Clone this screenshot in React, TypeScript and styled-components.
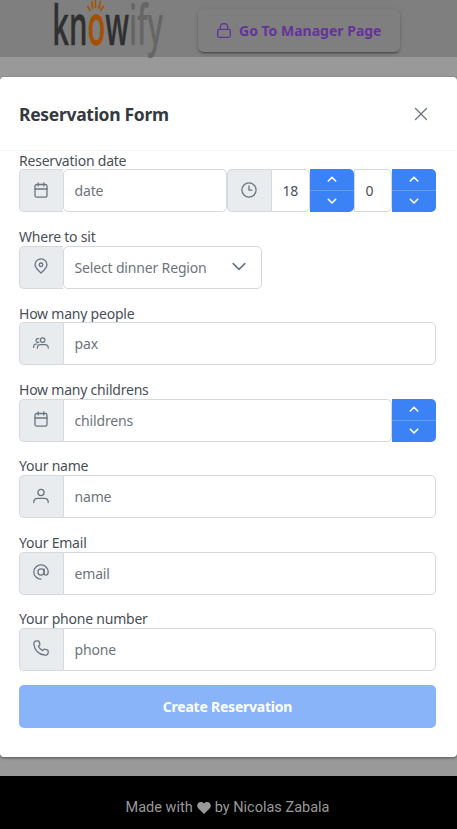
import React from "react";
import styled, { createGlobalStyle } from "styled-components";

const GlobalStyle = createGlobalStyle`
  * { box-sizing: border-box; }
  body {
    margin: 0;
    background: #999999;
    font-family: "Noto Sans", "Open Sans", sans-serif;
    font-size: 14px;
    color: #495057;
  }
`;

const Page = styled.div`
  height: 829px;
  display: flex;
  flex-direction: column;
  overflow: hidden;
`;

const TopBar = styled.header`
  height: 57px;
  flex: none;
  display: flex;
  align-items: flex-start;
  padding-left: 50px;
  background: #7f7f7f;
`;

const Logo = styled.svg`
  width: 120px;
  height: 57px;
  flex: none;
  overflow: visible;
  margin-right: 28px;
  font-family: "Open Sans", sans-serif;
  font-weight: 600;
`;

const ManagerButton = styled.button`
  width: 202px;
  height: 43px;
  margin-top: 9px;
  padding: 0 0 0 18px;
  display: flex;
  align-items: center;
  gap: 7px;
  border: 0;
  border-radius: 6px;
  background: #7f7f7f;
  color: #663399;
  font: 700 14px "Noto Sans", sans-serif;
  letter-spacing: 0;
  white-space: nowrap;
  box-shadow: 0 3px 1px -2px rgba(0, 0, 0, 0.2), 0 2px 2px rgba(0, 0, 0, 0.16),
    0 1px 5px rgba(0, 0, 0, 0.14);
`;

const Backdrop = styled.main`
  flex: 1;
  padding-top: 20px;
`;

const Dialog = styled.section`
  height: 680px;
  border-radius: 4px;
  background: #ffffff;
  box-shadow: 0 1px 3px rgba(0, 0, 0, 0.45);
`;

const DialogHeader = styled.div`
  height: 74px;
  padding: 0 28px 0 19px;
  display: flex;
  align-items: center;
  justify-content: space-between;
  border-bottom: 1px solid #f6f6f7;
`;

const Title = styled.h1`
  margin: 0;
  font-size: 17.5px;
  font-weight: 700;
  line-height: 24px;
  color: #343a40;
  letter-spacing: -0.3px;
`;

const CloseButton = styled.button`
  width: 16px;
  height: 16px;
  padding: 0;
  border: 0;
  display: flex;
  align-items: center;
  justify-content: center;
  background: none;
  color: #6c757d;
`;

const Form = styled.form`
  margin-top: -0.37px;
  padding: 0 21px 0 19px;
  display: flex;
  flex-direction: column;
`;

const Field = styled.div`
  height: 76.45px;
`;

const Label = styled.label`
  display: block;
  height: 18.72px;
  line-height: 20px;
  white-space: nowrap;
  letter-spacing: -0.22px;
`;

const Group = styled.div`
  display: flex;
  height: 43px;
`;

const Addon = styled.span`
  width: 44px;
  flex: none;
  display: flex;
  align-items: center;
  justify-content: center;
  padding: 0 0.5px 2px 0;
  border: 1px solid #d4d9de;
  border-right: 0;
  border-radius: 5px 0 0 5px;
  background: #e9ecef;
  color: #6c757d;
`;

const Box = styled.div<{ $width?: number; $rounded?: boolean; $value?: boolean }>`
  ${(p) => (p.$width ? `width: ${p.$width}px; flex: none;` : "flex: 1;")}
  display: flex;
  align-items: center;
  justify-content: space-between;
  padding: 0 14px 0 10.5px;
  border: 1px solid #d4d9de;
  border-radius: ${(p) => (p.$rounded ? "5px" : "0 5px 5px 0")};
  background: #ffffff;
  color: ${(p) => (p.$value ? "#495057" : "#6c757d")};
  letter-spacing: -0.16px;
  white-space: nowrap;
`;

const Spinner = styled.div`
  width: 44px;
  flex: none;
  display: flex;
  flex-direction: column;
  overflow: hidden;
  border-radius: 0 5px 5px 0;
  background: #3b82f6;
`;

const Step = styled.button`
  flex: 1;
  padding: 0 0 1px;
  display: flex;
  align-items: center;
  justify-content: center;
  border: 0;
  background: none;
  color: #ffffff;
  & + & {
    border-top: 1px solid #659df8;
  }
`;

const Submit = styled.button`
  height: 43px;
  margin-top: -0.8px;
  border: 0;
  border-radius: 5px;
  background: #89b4fa;
  color: #ffffff;
  font: 700 14px "Noto Sans", sans-serif;
  letter-spacing: -0.22px;
`;

const Footer = styled.footer`
  height: 53px;
  flex: none;
  display: flex;
  align-items: center;
  justify-content: center;
  gap: 4px;
  padding: 10px 2px 0 0;
  background: #000000;
  color: #999999;
  font-family: Roboto, sans-serif;
  font-size: 14.5px;
`;

const Glyph = styled.svg<{ $size?: number; $stroke?: number }>`
  width: ${(p) => p.$size ?? 16}px;
  height: ${(p) => p.$size ?? 16}px;
  flex: none;
  fill: none;
  stroke: currentColor;
  stroke-width: ${(p) => p.$stroke ?? 1.3};
  stroke-linecap: round;
  stroke-linejoin: round;
`;

const CalendarIcon = () => (
  <Glyph viewBox="0 0 16 16">
    <rect x="2" y="2.5" width="12" height="12.6" rx="1.7" />
    <path d="M2 7H14M5.2 .9V4M10.8 .9V4" />
  </Glyph>
);
const ClockIcon = () => (
  <Glyph viewBox="0 0 16 16">
    <circle cx="8" cy="8" r="7.1" />
    <path d="M8 3.8V8.2H10.8" />
  </Glyph>
);
const PinIcon = () => (
  <Glyph viewBox="0 0 16 16">
    <path d="M8 15C5.2 12.5 2 9.6 2 6.7a6 5.8 0 0 1 12 0C14 9.6 10.8 12.5 8 15Z" />
    <circle cx="8" cy="6.8" r="1.8" />
  </Glyph>
);
const UsersIcon = () => (
  <Glyph viewBox="0 0 16 16" $stroke={1.2}>
    <circle cx="9.7" cy="5.1" r="2.3" />
    <path d="M4.4 13.2V12.5C4.4 10.5 5.7 9.6 7.4 9.6H11.8C14 9.6 15.3 10.9 15.3 13.2" />
    <path d="M5.9 7.2C4.1 7.6 3.1 6.6 3.1 5.4C3.1 4 4.3 3.2 5.8 3.7M.7 12.5V11.5C.7 10 1.7 9 3.3 9H4.2" />
  </Glyph>
);
const UserIcon = () => (
  <Glyph viewBox="0 0 16 16">
    <circle cx="8" cy="4.5" r="3.1" />
    <path d="M.8 14.5V14C.8 11.6 2.4 10.4 4.8 10.4H11.2C13.6 10.4 15.2 11.6 15.2 14V14.5" />
  </Glyph>
);
const AtIcon = () => (
  <Glyph viewBox="0 0 16 16">
    <circle cx="8" cy="8" r="3.1" />
    <path d="M11.1 5V9.4C11.1 12 15.2 11.6 15.2 8C15.2 4 12 .9 8 .9S.8 4 .8 8S4 15.1 8 15.1" />
  </Glyph>
);
const PhoneIcon = () => (
  <Glyph viewBox="0 0 16 16">
    <path d="M3.6.9C2 .9.7 2.2.8 3.9C1.5 10.2 5.7 14.6 12.1 15.2C13.9 15.3 15.2 14 15.2 12.4V11.2C15.2 10.5 14.8 10.1 14.2 9.9L11.7 9.2C11.2 9 10.8 9.2 10.5 9.6L9.7 10.7C7.9 9.8 6.2 8.1 5.3 6.3L6.5 5.4C6.9 5.1 7 4.7 6.9 4.2L6.2 1.8C6 1.2 5.6.9 5 .9Z" />
  </Glyph>
);
const LockIcon = () => (
  <Glyph viewBox="0 0 16 16">
    <rect x="1.7" y="6.3" width="12.6" height="8" rx="1.7" />
    <path d="M4.3 6.2V3.8a3.7 3.3 0 0 1 7.4 0V6.2" />
  </Glyph>
);
const Chevron = ({ up = false }: { up?: boolean }) => (
  <Glyph $size={10} $stroke={1.6} viewBox="0 0 10 10">
    <path d={up ? "M1.3 7L5 3.2L8.7 7" : "M1.3 3.2L5 7L8.7 3.2"} />
  </Glyph>
);

const Steps = () => (
  <Spinner>
    <Step type="button" aria-label="Increase"><Chevron up /></Step>
    <Step type="button" aria-label="Decrease"><Chevron /></Step>
  </Spinner>
);

const KnowifyLogo = () => (
  <Logo viewBox="0 0 120 57" aria-label="knowify">
    <text x="2.2" y="44.5" fontSize="56" fill="#303030" stroke="#303030" strokeWidth="0.3" textLength="111" lengthAdjust="spacingAndGlyphs">
      kn<tspan fill="#a45000" stroke="#a45000">o</tspan>w<tspan fill="#666666" stroke="none">ify</tspan>
    </text>
    <path d="M37.5 6L40.5 11M41.5 1L42.9 9M45.5 0V8M50.5 1L48.5 9M53.5 6L50.5 11" stroke="#a45000" strokeWidth="1.6" />
  </Logo>
);

type TextFieldProps = {
  label: string;
  placeholder: string;
  icon: React.ReactNode;
  steps?: boolean;
};

const TextField = ({ label, placeholder, icon, steps }: TextFieldProps) => (
  <Field>
    <Label>{label}</Label>
    <Group>
      <Addon>{icon}</Addon>
      <Box>{placeholder}</Box>
      {steps && <Steps />}
    </Group>
  </Field>
);

export default function App() {
  return (
    <Page>
      <GlobalStyle />
      <TopBar>
        <KnowifyLogo />
        <ManagerButton><LockIcon />Go To Manager Page</ManagerButton>
      </TopBar>
      <Backdrop>
        <Dialog role="dialog">
          <DialogHeader>
            <Title>Reservation Form</Title>
            <CloseButton aria-label="Close">
              <Glyph $size={14} viewBox="0 0 14 14"><path d="M1.5 1.5L12.5 12.5M12.5 1.5L1.5 12.5" /></Glyph>
            </CloseButton>
          </DialogHeader>
          <Form>
            <Field>
              <Label>Reservation date</Label>
              <Group>
                <Addon><CalendarIcon /></Addon>
                <Box $rounded>date</Box>
                <Addon><ClockIcon /></Addon>
                <Box $width={39} $value>18</Box>
                <Steps />
                <Box $width={38} $value>0</Box>
                <Steps />
              </Group>
            </Field>
            <Field>
              <Label>Where to sit</Label>
              <Group>
                <Addon><PinIcon /></Addon>
                <Box $width={199} $rounded>
                  Select dinner Region
                  <Glyph $stroke={1.6} viewBox="0 0 16 16"><path d="M2.2 4.6L8 10.4L13.8 4.6" /></Glyph>
                </Box>
              </Group>
            </Field>
            <TextField label="How many people" placeholder="pax" icon={<UsersIcon />} />
            <TextField label="How many childrens" placeholder="childrens" icon={<CalendarIcon />} steps />
            <TextField label="Your name" placeholder="name" icon={<UserIcon />} />
            <TextField label="Your Email" placeholder="email" icon={<AtIcon />} />
            <TextField label="Your phone number" placeholder="phone" icon={<PhoneIcon />} />
            <Submit type="button">Create Reservation</Submit>
          </Form>
        </Dialog>
      </Backdrop>
      <Footer>
        <span>Made with</span>
        <svg width="14" height="12" viewBox="0 0 14 12" fill="#999999" aria-label="love">
          <path d="M7 12L1.2 6.3C-2 2.7 3-2.5 7 1.6C11-2.5 16 2.7 12.8 6.3Z" />
        </svg>
        <span>by Nicolas Zabala</span>
      </Footer>
    </Page>
  );
}
